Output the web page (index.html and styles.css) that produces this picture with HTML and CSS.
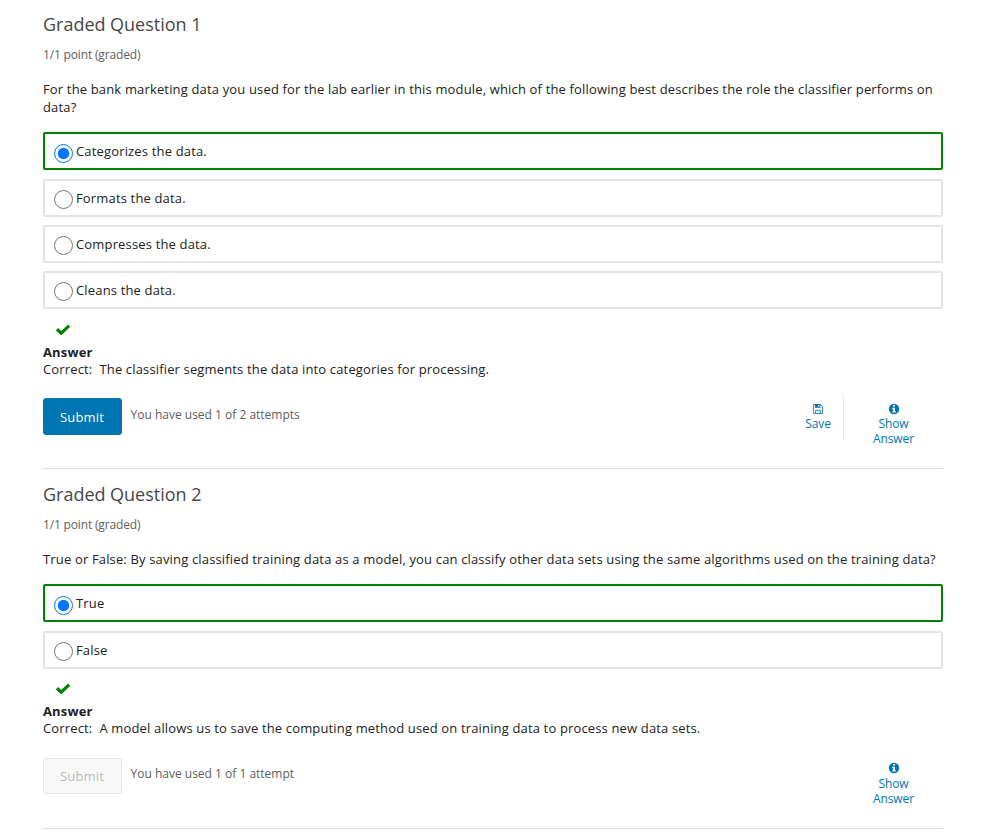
FILE: index.html
```html
<!DOCTYPE html>
<html lang="en">
<head>
<meta charset="utf-8">
<title>Graded Questions</title>
<link rel="stylesheet" href="styles.css">
</head>
<body>
<main>
<section class="problem">
  <h3>Graded Question 1</h3>
  <div class="progress">1/1 point (graded)</div>
  <p class="prompt">For the bank marketing data you used for the lab earlier in this module, which of the following best describes the role the classifier performs on data?</p>
  <div class="choices">
    <label class="choice correct"><input type="radio" name="q1" checked>Categorizes the data.</label>
    <label class="choice"><input type="radio" name="q1">Formats the data.</label>
    <label class="choice"><input type="radio" name="q1">Compresses the data.</label>
    <label class="choice"><input type="radio" name="q1">Cleans the data.</label>
  </div>
  <svg class="check" viewBox="0 0 14 11"><path d="M1 5.2 5.3 9.2 13.2 1.6" fill="none" stroke="#008100" stroke-width="3.2"/></svg>
  <div class="answer"><strong>Answer</strong><br>Correct:&nbsp; The classifier segments the data into categories for processing.</div>
  <div class="action">
    <button class="submit">Submit</button>
    <span class="attempts">You have used 1 of 2 attempts</span>
    <div class="tools">
      <div class="tool save"><svg viewBox="0 0 12 12"><path d="M1.5 1.5h7l2 2v7h-9zM3.5 10.5v-3h5v3" fill="none" stroke="currentColor" stroke-width=".8"/><path d="M3 1h5.5v3.7H3zM6.2 1.8v2h1.2v-2z" fill="currentColor" fill-rule="evenodd"/></svg>Save</div>
      <div class="tool show"><svg viewBox="0 0 12 12"><circle cx="6" cy="6" r="5.2" fill="currentColor"/><path d="M5 2h2v1.6H5zM4.3 4.8H7v3.4h.8v1.2H4.3V8.2h.8V6h-.8z" fill="#fff"/></svg>Show<br>Answer</div>
    </div>
  </div>
</section>
<section class="problem second">
  <h3>Graded Question 2</h3>
  <div class="progress">1/1 point (graded)</div>
  <p class="prompt">True or False: By saving classified training data as a model, you can classify other data sets using the same algorithms used on the training data?</p>
  <div class="choices">
    <label class="choice correct"><input type="radio" name="q2" checked>True</label>
    <label class="choice"><input type="radio" name="q2">False</label>
  </div>
  <svg class="check" viewBox="0 0 14 11"><path d="M1 5.2 5.3 9.2 13.2 1.6" fill="none" stroke="#008100" stroke-width="3.2"/></svg>
  <div class="answer"><strong>Answer</strong><br>Correct:&nbsp; A model allows us to save the computing method used on training data to process new data sets.</div>
  <div class="action">
    <button class="submit" disabled>Submit</button>
    <span class="attempts">You have used 1 of 1 attempt</span>
    <div class="tools">
      <div class="tool show"><svg viewBox="0 0 12 12"><circle cx="6" cy="6" r="5.2" fill="currentColor"/><path d="M5 2h2v1.6H5zM4.3 4.8H7v3.4h.8v1.2H4.3V8.2h.8V6h-.8z" fill="#fff"/></svg>Show<br>Answer</div>
    </div>
  </div>
</section>
</main>
</body>
</html>
```
FILE: styles.css
```css
* { box-sizing: border-box; }
body { margin: 0; background: #fff; color: #222; font: 13px/18px "Open Sans", sans-serif; overflow: hidden; }
main { width: 900px; margin-left: 43px; }
.problem { height: 469px; padding-top: 12px; border-bottom: 1px solid #ddd; display: flex; flex-direction: column; }
.second { height: 360px; padding-top: 13px; }
h3 { margin: 0; font-size: 18px; line-height: 25px; font-weight: 400; color: #474747; letter-spacing: -.02px; }
.progress { margin-top: 9px; font-size: 12px; color: #5e5e5e; letter-spacing: -.16px; }
.prompt { margin: 16px 0 0; letter-spacing: .156px; }
.choices { margin-top: 16px; display: flex; flex-direction: column; gap: 8px; }
.choice { height: 38px; border: 2px solid #e4e4e4; border-radius: 2px; display: flex; align-items: center; padding: 0 0 1px 9px; letter-spacing: .16px; }
.choice.correct { border-color: #008100; margin-bottom: 1px; }
.choice input { width: 19px; height: 19px; margin: 4px 3px 0 0; }
.choice.correct input { margin-top: 5px; }
.check { width: 14px; height: 11px; margin: 15px 0 0 13px; flex: none; }
.second .check { margin-top: 14px; }
.answer { margin-top: 9px; line-height: 17px; letter-spacing: .15px; }
.action { display: flex; margin-top: 20px; height: 50px; }
.second .action { margin-top: 21px; }
.submit { width: 79px; height: 37px; padding: 0 1px 0 0; border: 1px solid #0075b4; border-radius: 3px; background: #0075b4; color: #fff; font: 13px "Open Sans", sans-serif; letter-spacing: .2px; }
.submit:disabled { height: 36px; padding-bottom: 1px; background: #f8f8f8; border-color: #e5e5e5; color: #bbb; }
.attempts { margin: 8px 0 0 8.5px; font-size: 12px; color: #5e5e5e; }
.second .attempts { margin-top: 7px; }
.tools { display: flex; margin-left: auto; }
.tool { color: #0075b4; font-size: 12px; line-height: 15px; letter-spacing: -.1px; text-align: center; display: flex; flex-direction: column; align-items: center; }
.tool svg { width: 12px; height: 12px; margin: 5px 0 1px; }
.second .tool svg { margin: 4px 0 2px; }
.save { width: 52px; height: 46px; margin-top: -4px; padding-top: 4px; padding-left: 1px; border-right: 1px solid #e8e8e8; }
.show { width: 99px; }
```
